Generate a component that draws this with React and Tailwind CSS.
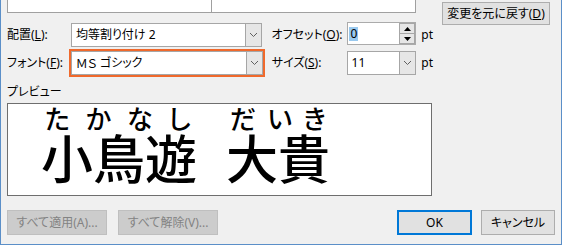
import React from 'react';

const UI = "font-['Noto_Sans','Noto_Sans_CJK_JP',sans-serif] [font-feature-settings:'palt']";
const JP = "font-['Noto_Sans_CJK_JP',sans-serif]";

function Chevron() {
  return (
    <svg width="9" height="6" viewBox="0 0 9 6" className="block">
      <polyline points="1,1 4.5,4.5 8,1" fill="none" stroke="#606060" strokeWidth="1" />
    </svg>
  );
}

function Combo({ width, children, className = '' }) {
  return (
    <div className={`flex h-[24px] border border-[#a6a6a6] bg-white ${className}`} style={{ width }}>
      <div className="flex flex-1 items-center pl-[4px] text-[12px] text-black">{children}</div>
      <div className="flex w-[16px] items-center justify-center border-l border-[#a6a6a6] bg-[#e6e6e6]">
        <Chevron />
      </div>
    </div>
  );
}

function Key({ k }) {
  return <span className="underline underline-offset-1">{k}</span>;
}

function Btn({ children, className = '' }) {
  return (
    <div className={`flex h-[25px] items-center justify-center border text-[12px] ${className}`}>
      {children}
    </div>
  );
}

export default function App() {
  return (
    <div className={`${UI} box-border flex h-[245px] w-[562px] flex-col overflow-hidden border-x border-b border-[#5b8fc8] bg-[#f0f0f0] text-[12px] leading-none text-black`}>
      <div className="flex">
        {/* left column */}
        <div className="ml-[6px] flex w-[426px] flex-col">
          <div className="flex h-[13px]">
            <div className="w-[205px] border-x border-b border-[#a0a0a0] bg-white" />
            <div className="w-[204px] border-r border-b border-[#a0a0a0] bg-white" />
          </div>

          {/* 配置 row */}
          <div className="mt-[9px] flex h-[25px] items-center">
            <div className="w-[64px]">配置(<Key k="L" />):</div>
            <Combo width={191} className="mt-[1px]">均等割り付け 2</Combo>
            <div className="ml-[10px] w-[76px]">オフセット(<Key k="O" />):</div>
            <div className="flex h-[23px] w-[69px] self-start border border-[#ababab] bg-white">
              <div className="flex flex-1 items-center pl-[1px]">
                <span className="bg-[#99c9ef] px-[1px] py-[1px] leading-[12px]">0</span>
              </div>
              <div className="flex w-[16px] flex-col">
                <div className="flex flex-1 items-center justify-center border border-[#a6a6a6] bg-[#e6e6e6]">
                  <svg width="7" height="4" viewBox="0 0 7 4"><polygon points="3.5,0 7,4 0,4" fill="#000" /></svg>
                </div>
                <div className="flex flex-1 items-center justify-center border-x border-b border-[#a6a6a6] bg-[#e6e6e6]">
                  <svg width="7" height="4" viewBox="0 0 7 4"><polygon points="0,0 7,0 3.5,4" fill="#000" /></svg>
                </div>
              </div>
            </div>
            <div className="ml-[5px]">pt</div>
          </div>

          {/* フォント row */}
          <div className="mt-[2px] flex h-[28px] items-center">
            <div className="w-[62px]">フォント(<Key k="F" />):</div>
            <div className="border-2 border-[#f0692c]">
              <Combo width={192}>
                <span className={JP}>ＭＳ</span>
                <span>&nbsp;ゴシック</span>
              </Combo>
            </div>
            <div className="ml-[7px] w-[75px]">サイズ(<Key k="S" />):</div>
            <Combo width={70}>11</Combo>
            <div className="ml-[5px]">pt</div>
          </div>

          <div className="mt-[9px] h-[12px] leading-[12px]">プレビュー</div>

          {/* preview */}
          <div className={`${JP} mt-[5px] flex h-[93px] w-[425px] border border-[#6e6e6e] bg-white pl-[33px] font-medium`}>
            <div className="flex w-[156px] flex-col">
              <div className="mt-[1px] flex h-[26px] gap-[16px] pl-[4px] text-[26px] leading-[26px]">
                <span>た</span><span>か</span><span>な</span><span>し</span>
              </div>
              <div className="text-[52px] leading-[52px]">小鳥遊</div>
            </div>
            <div className="ml-[29px] flex w-[104px] flex-col">
              <div className="mt-[1px] flex h-[26px] gap-[11px] pl-[4px] text-[26px] leading-[26px]">
                <span>だ</span><span>い</span><span>き</span>
              </div>
              <div className="text-[52px] leading-[52px]">大貴</div>
            </div>
          </div>
        </div>

        {/* right column */}
        <div className="ml-[9px] mt-[2px]">
          <div className="flex h-[23px] w-[108px] items-center justify-center border border-[#adadad] bg-[#e1e1e1]">
            変更を元に戻す(<Key k="D" />)
          </div>
        </div>
      </div>

      {/* bottom buttons */}
      <div className="mt-[14px] flex pl-[6px]">
        <Btn className="w-[100px] border-[#bfbfbf] bg-[#cccccc] text-[#838383]">すべて適用(A)...</Btn>
        <Btn className="ml-[11px] w-[100px] border-[#bfbfbf] bg-[#cccccc] text-[#838383]">すべて解除(V)...</Btn>
        <Btn className="ml-[179px] w-[75px] border-2 border-[#0078d7] bg-[#e1e1e1]">OK</Btn>
        <Btn className="ml-[9px] w-[74px] border-[#adadad] bg-[#e1e1e1]">キャンセル</Btn>
      </div>
    </div>
  );
}
